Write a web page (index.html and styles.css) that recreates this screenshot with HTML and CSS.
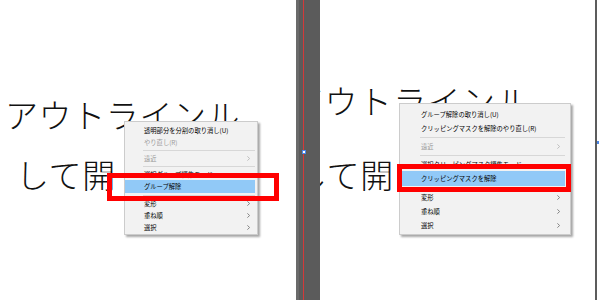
FILE: index.html
```html
<!DOCTYPE html>
<html>
<head>
<meta charset="utf-8" />
<title>グループ解除とクリッピングマスクを解除</title>
<link rel="stylesheet" href="styles.css">
</head>
<body>

<div class="artboard left">
	<div class="art">
		<div class="line first">アウトラインル</div>
		<div class="line second">して開</div>
	</div>

	<div class="menu">
		<div class="item">透明部分を分割の取り消し(U)</div>
		<div class="item disabled">やり直し(R)</div>
		<div class="sep"></div>
		<div class="item disabled">遠近<svg class="arrow" viewBox="0 0 4 7"><polyline points="0.5,0.5 3.5,3.5 0.5,6.5" /></svg></div>
		<div class="sep"></div>
		<div class="item">選択グループ編集モード</div>
		<div class="item active">グループ解除</div>
		<div class="sep"></div>
		<div class="item">変形<svg class="arrow" viewBox="0 0 4 7"><polyline points="0.5,0.5 3.5,3.5 0.5,6.5" /></svg></div>
		<div class="item">重ね順<svg class="arrow" viewBox="0 0 4 7"><polyline points="0.5,0.5 3.5,3.5 0.5,6.5" /></svg></div>
		<div class="item">選択<svg class="arrow" viewBox="0 0 4 7"><polyline points="0.5,0.5 3.5,3.5 0.5,6.5" /></svg></div>
	</div>

	<div class="mark"></div>
</div>

<div class="gutter">
	<div class="guide"></div>
	<div class="handle"></div>
</div>

<div class="artboard right">
	<div class="art">
		<div class="line first">アウトラインル</div>
		<div class="line second">して開</div>
	</div>

	<div class="menu">
		<div class="item">グループ解除の取り消し(U)</div>
		<div class="item">クリッピングマスクを解除のやり直し(R)</div>
		<div class="sep"></div>
		<div class="item disabled">遠近<svg class="arrow" viewBox="0 0 4 7"><polyline points="0.5,0.5 3.5,3.5 0.5,6.5" /></svg></div>
		<div class="sep"></div>
		<div class="item">選択クリッピングマスク編集モード</div>
		<div class="item active">クリッピングマスクを解除</div>
		<div class="sep"></div>
		<div class="item">変形<svg class="arrow" viewBox="0 0 4 7"><polyline points="0.5,0.5 3.5,3.5 0.5,6.5" /></svg></div>
		<div class="item">重ね順<svg class="arrow" viewBox="0 0 4 7"><polyline points="0.5,0.5 3.5,3.5 0.5,6.5" /></svg></div>
		<div class="item">選択<svg class="arrow" viewBox="0 0 4 7"><polyline points="0.5,0.5 3.5,3.5 0.5,6.5" /></svg></div>
	</div>

	<div class="mark"></div>
</div>

<div class="edge">
	<div class="edgeHandle"></div>
</div>

</body>
</html>
```

FILE: styles.css
```css
html, body {
	margin: 0;
	padding: 0;
	width: 600px;
	height: 300px;
	overflow: hidden;
}

body {
	display: flex;
	background: #ffffff;
	font-family: "Noto Sans CJK JP", "Noto Sans", sans-serif;
}

.artboard {
	position: relative;
	overflow: hidden;
	background: #ffffff;
	height: 300px;
}

.artboard.left {
	width: 296px;
	border-right: 3px solid #6a6a6a;
}

.artboard.right {
	width: 275px;
	border-right: 2px solid #5c5c5c;
}

/* outlined text on the artboard */
.art .line {
	font-size: 33px;
	font-weight: 300;
	line-height: 33px;
	letter-spacing: 0.6px;
	color: #111111;
	white-space: nowrap;
}

.left .art {
	padding-top: 98px;
}

.left .line.first {
	margin-left: 5px;
}

.left .line.second {
	margin-top: 27px;
	margin-left: 16px;
}

.right .art {
	padding-top: 84px;
}

.right .line.first {
	margin-left: -30px;
	letter-spacing: 1.4px;
}

.right .line.second {
	margin-top: 41px;
	margin-left: -26px;
}

/* context menu */
.menu {
	position: absolute;
	background: #f2f2f2;
	border: 1px solid #cccccc;
	box-shadow: 2px 2px 2px rgba(0, 0, 0, 0.35);
	font-size: 6.3px;
	color: #000000;
	box-sizing: border-box;
}

.left .menu {
	left: 124px;
	top: 121px;
	width: 134px;
	padding: 2px 2px 1px 0;
}

.right .menu {
	left: 79px;
	top: 103px;
	width: 172px;
	padding: 3px 5px 2px 0;
}

.menu .item {
	display: flex;
	align-items: center;
	justify-content: space-between;
	height: 12px;
	padding-left: 19px;
	padding-right: 5px;
	white-space: nowrap;
}

.right .menu .item {
	height: 14px;
	padding-left: 21px;
}

.menu .item.disabled {
	color: #9a9a9a;
}

.menu .item.active {
	background: #91c9f7;
	height: 13px;
}

.right .menu .item.active {
	height: 15px;
}

.menu .sep {
	height: 4px;
	margin-left: 18px;
	display: flex;
	align-items: center;
}

.menu .sep::after {
	content: "";
	flex: 1;
	height: 1px;
	background: #d7d7d7;
}

.right .menu .sep {
	margin-left: 20px;
}

.arrow {
	width: 3px;
	height: 5px;
	fill: none;
	stroke: #555555;
	stroke-width: 1;
}

.disabled .arrow {
	stroke: #a8a8a8;
}

/* red highlight frame */
.mark {
	position: absolute;
	border: 5px solid #ff0000;
	box-sizing: border-box;
	height: 28px;
}

.left .mark {
	left: 107px;
	top: 173px;
	width: 172px;
}

.right .mark {
	left: 77px;
	top: 164px;
	width: 174px;
}

/* dark area between the artboards */
.gutter {
	position: relative;
	width: 21px;
	height: 300px;
	background: #5b5b5b;
}

.guide {
	position: absolute;
	left: 4px;
	top: 0;
	width: 1px;
	height: 300px;
	background: #d23a3a;
}

.handle {
	position: absolute;
	left: 3px;
	top: 150px;
	width: 2px;
	height: 2px;
	border: 1px solid #4a86e8;
	background: #ffffff;
}

.edge {
	position: relative;
	flex: 1;
	background: #ffffff;
}

.edgeHandle {
	position: absolute;
	left: 0;
	top: 141px;
	width: 2px;
	height: 3px;
	background: #4a86e8;
}
```
